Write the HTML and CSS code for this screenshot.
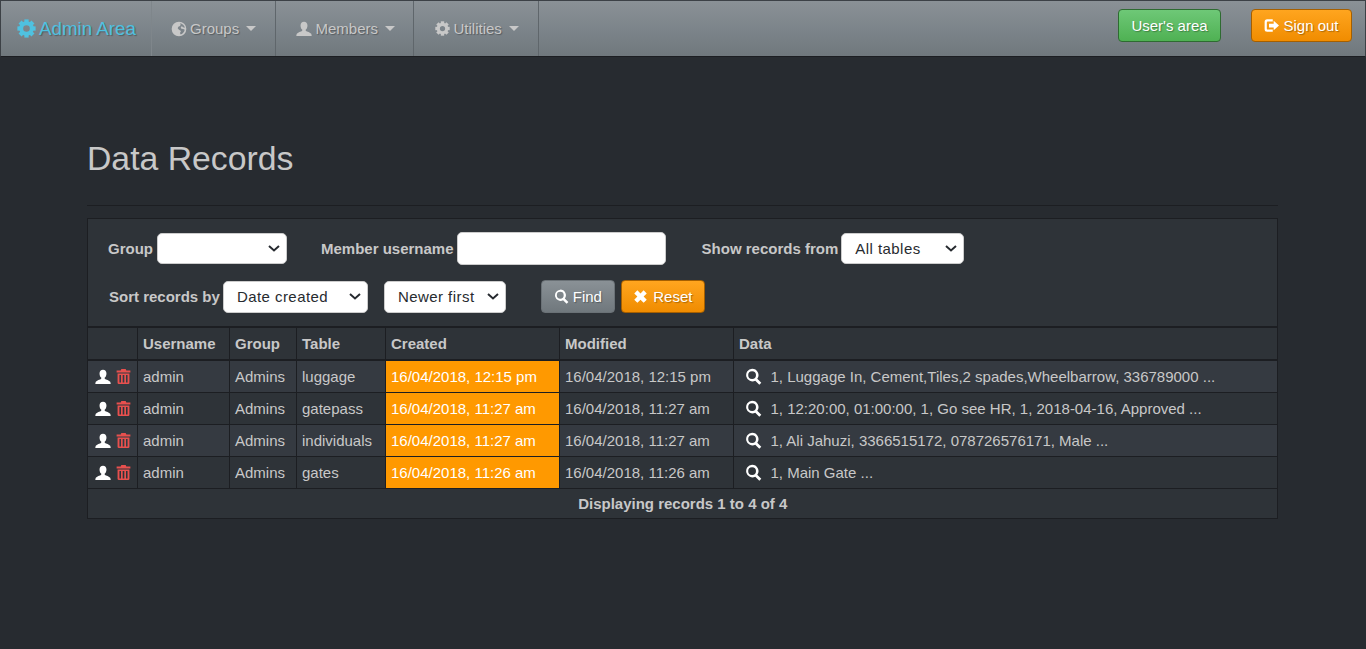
FILE: index.html
```html
<!DOCTYPE html>
<html lang="en">
<head>
<meta charset="utf-8">
<title>Data Records</title>
<link rel="stylesheet" href="styles.css">
</head>
<body>
<svg class="defs" width="0" height="0" aria-hidden="true">
  <defs>
    <symbol id="i-cog" viewBox="0 0 24 24">
      <circle cx="12" cy="12" r="6.700" fill="none" stroke="currentColor" stroke-width="5"/>
      <g fill="currentColor">
        <rect x="9.300" y="0.500" width="5.400" height="6"/>
        <rect x="9.300" y="0.500" width="5.400" height="6" transform="rotate(45 12 12)"/>
        <rect x="9.300" y="0.500" width="5.400" height="6" transform="rotate(90 12 12)"/>
        <rect x="9.300" y="0.500" width="5.400" height="6" transform="rotate(135 12 12)"/>
        <rect x="9.300" y="0.500" width="5.400" height="6" transform="rotate(180 12 12)"/>
        <rect x="9.300" y="0.500" width="5.400" height="6" transform="rotate(225 12 12)"/>
        <rect x="9.300" y="0.500" width="5.400" height="6" transform="rotate(270 12 12)"/>
        <rect x="9.300" y="0.500" width="5.400" height="6" transform="rotate(315 12 12)"/>
      </g>
    </symbol>
    <symbol id="i-globe" viewBox="0 0 24 24"><path fill="currentColor" fill-rule="evenodd" d="M12 1a11 11 0 1 0 0 22 11 11 0 0 0 0-22zM13.500 3.500C17 4 20 6.500 20.800 10L18 9.500 16.500 8 14.500 9l1 2.500 3 .5 2 1c-.5 3-2.500 6-6 7.300L13.500 18l1.500-3-3-2-2-2 1-2.500 2.500-1 1-2z"/></symbol>
    <symbol id="i-user" viewBox="0 0 24 24"><path fill="currentColor" d="M12 1c3.200 0 5.200 2.400 5.200 5.600 0 2.600-1 5-2.400 6.300-.4.400-.4 1.500.2 2 1.200.8 6.600 2.200 7.800 4.300.6 1.100.7 2.300.7 3.300H.500c0-1 .1-2.200.7-3.300 1.200-2.100 6.600-3.500 7.800-4.300.6-.5.6-1.600.2-2C7.800 11.600 6.800 9.200 6.800 6.600 6.800 3.400 8.800 1 12 1z"/></symbol>
    <symbol id="i-signout" viewBox="0 0 24 24"><path fill="currentColor" d="M1 6a4 4 0 0 1 4-4h9v3.500H6a1.500 1.500 0 0 0-1.500 1.500v10A1.500 1.500 0 0 0 6 18.500h8V22H5a4 4 0 0 1-4-4z"/><path fill="currentColor" d="M8 9h7.500V4.500L24 12l-8.500 7.500V15H8z"/></symbol>
    <symbol id="i-search" viewBox="0 0 24 24"><path fill="currentColor" fill-rule="evenodd" d="M10 1a9 9 0 0 1 7.300 14.300l5.700 5.500-2.800 2.800-5.700-5.500A9 9 0 1 1 10 1zm0 3.500a5.500 5.500 0 1 0 0 11 5.500 5.500 0 0 0 0-11z"/></symbol>
    <symbol id="i-remove" viewBox="0 0 24 24"><path fill="currentColor" d="M7 2l5 5 5-5L22 7l-5 5 5 5-5 5-5-5-5 5-5-5 5-5-5-5z"/></symbol>
    <symbol id="i-trash" viewBox="0 0 24 24"><path fill="currentColor" fill-rule="evenodd" d="M8.500 0h7l1 2.500h6.500V5.500H1V2.500h6.500zM2.500 7h19v15a2 2 0 0 1-2 2h-15a2 2 0 0 1-2-2zM5.500 9.500v12h2.500v-12zm5.200 0v12h2.600v-12zm5.300 0v12h2.500v-12z"/></symbol>
  </defs>
</svg>

<nav class="navbar">
  <a class="brand"><svg class="ic ic-brand"><use href="#i-cog"/></svg>Admin Area</a>
  <a class="nav-item nav-groups"><svg class="ic"><use href="#i-globe"/></svg>Groups<span class="caret"></span></a>
  <a class="nav-item nav-members"><svg class="ic"><use href="#i-user"/></svg>Members<span class="caret"></span></a>
  <a class="nav-item nav-utilities"><svg class="ic"><use href="#i-cog"/></svg>Utilities<span class="caret"></span></a>
  <div class="nav-actions">
    <a class="btn btn-green btn-users">User's area</a>
    <a class="btn btn-orange btn-signout"><svg class="ic"><use href="#i-signout"/></svg>Sign out</a>
  </div>
</nav>

<main class="container">
  <h1 class="page-title">Data Records</h1>
  <hr class="rule">
  <section class="records">
    <form class="filters">
      <div class="filter-row filter-row-1">
        <label class="field field-group">Group
          <select class="control select-group"><option></option></select></label>
        <label class="field field-member">Member username
          <input class="control input-member" type="text"></label>
        <label class="field field-table">Show records from
          <select class="control select-table"><option>All tables</option></select></label>
      </div>
      <div class="filter-row filter-row-2">
        <label class="field field-sort">Sort records by
          <select class="control select-sort"><option>Date created</option></select></label>
        <select class="control select-order"><option>Newer first</option></select>
        <button class="btn btn-grey btn-find" type="button"><svg class="ic"><use href="#i-search"/></svg>Find</button>
        <button class="btn btn-orange btn-reset" type="button"><svg class="ic"><use href="#i-remove"/></svg>Reset</button>
      </div>
    </form>
    <table class="grid">
      <colgroup>
        <col class="c-act"><col class="c-user"><col class="c-group"><col class="c-table"><col class="c-date"><col class="c-date"><col>
      </colgroup>
      <thead>
        <tr><th></th><th>Username</th><th>Group</th><th>Table</th><th>Created</th><th>Modified</th><th>Data</th></tr>
      </thead>
      <tbody>
        <tr>
          <td class="act"><svg class="ic-user"><use href="#i-user"/></svg><svg class="ic-trash"><use href="#i-trash"/></svg></td>
          <td>admin</td><td>Admins</td><td>luggage</td>
          <td class="hot">16/04/2018, 12:15 pm</td><td>16/04/2018, 12:15 pm</td>
          <td class="data"><svg class="ic-view"><use href="#i-search"/></svg>1, Luggage In, Cement,Tiles,2 spades,Wheelbarrow, 336789000 ...</td>
        </tr>
        <tr>
          <td class="act"><svg class="ic-user"><use href="#i-user"/></svg><svg class="ic-trash"><use href="#i-trash"/></svg></td>
          <td>admin</td><td>Admins</td><td>gatepass</td>
          <td class="hot">16/04/2018, 11:27 am</td><td>16/04/2018, 11:27 am</td>
          <td class="data"><svg class="ic-view"><use href="#i-search"/></svg>1, 12:20:00, 01:00:00, 1, Go see HR, 1, 2018-04-16, Approved ...</td>
        </tr>
        <tr>
          <td class="act"><svg class="ic-user"><use href="#i-user"/></svg><svg class="ic-trash"><use href="#i-trash"/></svg></td>
          <td>admin</td><td>Admins</td><td>individuals</td>
          <td class="hot">16/04/2018, 11:27 am</td><td>16/04/2018, 11:27 am</td>
          <td class="data"><svg class="ic-view"><use href="#i-search"/></svg>1, Ali Jahuzi, 3366515172, 078726576171, Male ...</td>
        </tr>
        <tr>
          <td class="act"><svg class="ic-user"><use href="#i-user"/></svg><svg class="ic-trash"><use href="#i-trash"/></svg></td>
          <td>admin</td><td>Admins</td><td>gates</td>
          <td class="hot">16/04/2018, 11:26 am</td><td>16/04/2018, 11:26 am</td>
          <td class="data"><svg class="ic-view"><use href="#i-search"/></svg>1, Main Gate ...</td>
        </tr>
      </tbody>
      <tfoot>
        <tr><td colspan="7">Displaying records 1 to 4 of 4</td></tr>
      </tfoot>
    </table>
  </section>
</main>
</body>
</html>
```

FILE: styles.css
```css
* { box-sizing: border-box; }
html, body { height: 100%; }
body {
  margin: 0;
  background: #272b30;
  color: #c8c8c8;
  font-family: "Liberation Sans", Arial, sans-serif;
  font-size: 15px;
  line-height: 20px;
  overflow: hidden;
}
.defs { position: absolute; }

.navbar {
  display: flex;
  align-items: stretch;
  height: 57px;
  border: 1px solid;
  border-color: #3c4146 #3c4146 #1c1e22 #3c4146;
  background: linear-gradient(#8a9196, #7a8288 60%, #70787d);
  text-shadow: 1px 1px 1px rgba(0,0,0,.3);
}
.ic { width: 16px; height: 16px; flex: none; }
.brand {
  display: flex;
  align-items: center;
  width: 151px;
  padding-left: 16px;
  color: #4fc1e0;
  font-size: 18.750px;
  border-right: 1px solid #7f868b;
}
.ic-brand { width: 19px; height: 19px; margin-right: 3px; }
.nav-item {
  display: flex;
  align-items: center;
  color: #c8c8c8;
  border-right: 1px solid #5f666b;
}
.nav-groups { width: 124px; padding-left: 19px; }
.nav-groups .ic { margin-right: 3px; }
.nav-members { width: 138px; padding-left: 20px; }
.nav-members .ic { margin-right: 3.500px; }
.nav-utilities { width: 125px; padding-left: 21px; }
.nav-utilities .ic { width: 15px; height: 15px; margin-right: 3.500px; }
.caret {
  width: 0;
  height: 0;
  margin-left: 7px;
  border-top: 5px solid currentColor;
  border-left: 5px solid transparent;
  border-right: 5px solid transparent;
}
.nav-actions {
  margin-left: auto;
  display: flex;
  align-items: flex-start;
  gap: 30px;
  padding: 8px 13px 0 0;
}
.btn {
  display: inline-flex;
  align-items: center;
  justify-content: center;
  height: 33px;
  border: 1px solid;
  border-radius: 4px;
  color: #fff;
  font: inherit;
  text-shadow: 1px 1px 1px rgba(0,0,0,.3);
}
.btn-green { background: linear-gradient(#6ec877, #4fb153); border-color: #2e6b31; }
.btn-orange { background: linear-gradient(#ffa51f, #f08c00); border-color: #a55f00; }
.btn-grey { background: linear-gradient(#8a9196, #70787d); border-color: #6a7176; }
.btn-users { width: 103px; }
.btn-signout { width: 101px; }
.btn .ic { width: 15px; height: 15px; margin-right: 4px; }
.btn-reset .ic { margin-right: 5px; }

.container { width: 1191px; margin-left: 87px; }
.page-title {
  margin: 0;
  padding-top: 81px;
  height: 147px;
  font-size: 33.750px;
  font-weight: 400;
  line-height: 40px;
  color: #c8c8c8;
}
.rule { margin: 1px 0 12px; border: 0; border-top: 1px solid #1c1e22; }
.records {
  border: 1px solid #1c1e22;
  background: #2e3338;
}
.filters { height: 107px; padding-top: 12px; }
.filter-row { display: flex; align-items: center; }
.filter-row-1 { height: 35px; padding-left: 20px; }
.filter-row-2 { height: 33px; margin-top: 14px; padding-left: 21px; }
.field { display: flex; align-items: center; gap: 3px; font-weight: 700; white-space: nowrap; }
.field-group { gap: 4px; }
.field-member { margin-left: 34px; }
.field-table { margin-left: 36px; }
.control {
  height: 31px;
  border: 1px solid #ccc;
  border-radius: 5px;
  background: #fff;
  color: #272b30;
  font-family: inherit;
  font-size: 15px;
  font-weight: 400;
  letter-spacing: .45px;
  padding: 0 13px;
}
select.control {
  appearance: none;
  -webkit-appearance: none;
  background: #fff url("data:image/svg+xml,%3Csvg xmlns='http://www.w3.org/2000/svg' width='12' height='7'%3E%3Cpath d='M1 1l5 4.500L11 1' fill='none' stroke='%23272b30' stroke-width='2'/%3E%3C/svg%3E") no-repeat right 6px center;
}
.select-group { width: 130px; }
.input-member { width: 209px; height: 33px; }
.select-table { width: 123px; }
.select-sort { width: 145px; height: 32px; }
.select-order { width: 122px; height: 32px; margin-left: 16px; }
.btn-find { width: 74px; margin-left: 35px; }
.btn-reset { width: 84px; margin-left: 6px; }

.grid { width: 100%; border-collapse: collapse; table-layout: fixed; }
.c-act { width: 49px; }
.c-user { width: 92px; }
.c-group { width: 67px; }
.c-table { width: 89px; }
.c-date { width: 174px; }
.grid th, .grid td {
  border: 1px solid #1c1e22;
  padding: 0 5px 0 5.500px;
  text-align: left;
  white-space: nowrap;
}
.grid tr > :first-child { border-left: 0; }
.grid tr > :last-child { border-right: 0; }
.grid th { height: 33px; font-weight: 700; border-bottom-width: 2px; border-top-width: 2px; }
.grid td { height: 32px; padding-top: 2px; }
.grid tbody tr:nth-child(odd) { background: #353a41; }
.grid .act { padding-left: 7px; }
.ic-user { width: 16px; height: 16px; color: #fff; margin-right: 5px; vertical-align: -3px; }
.ic-trash { width: 15px; height: 17px; color: #e8504e; vertical-align: -3px; }
.grid .hot { background: #ff9900; color: #fff; }
.grid .data { padding-left: 11px; }
.ic-view { width: 17px; height: 17px; color: #fff; margin-right: 9px; vertical-align: -3px; }
.grid tfoot td { height: 30px; text-align: center; font-weight: 700; border-bottom: 0; }
```
